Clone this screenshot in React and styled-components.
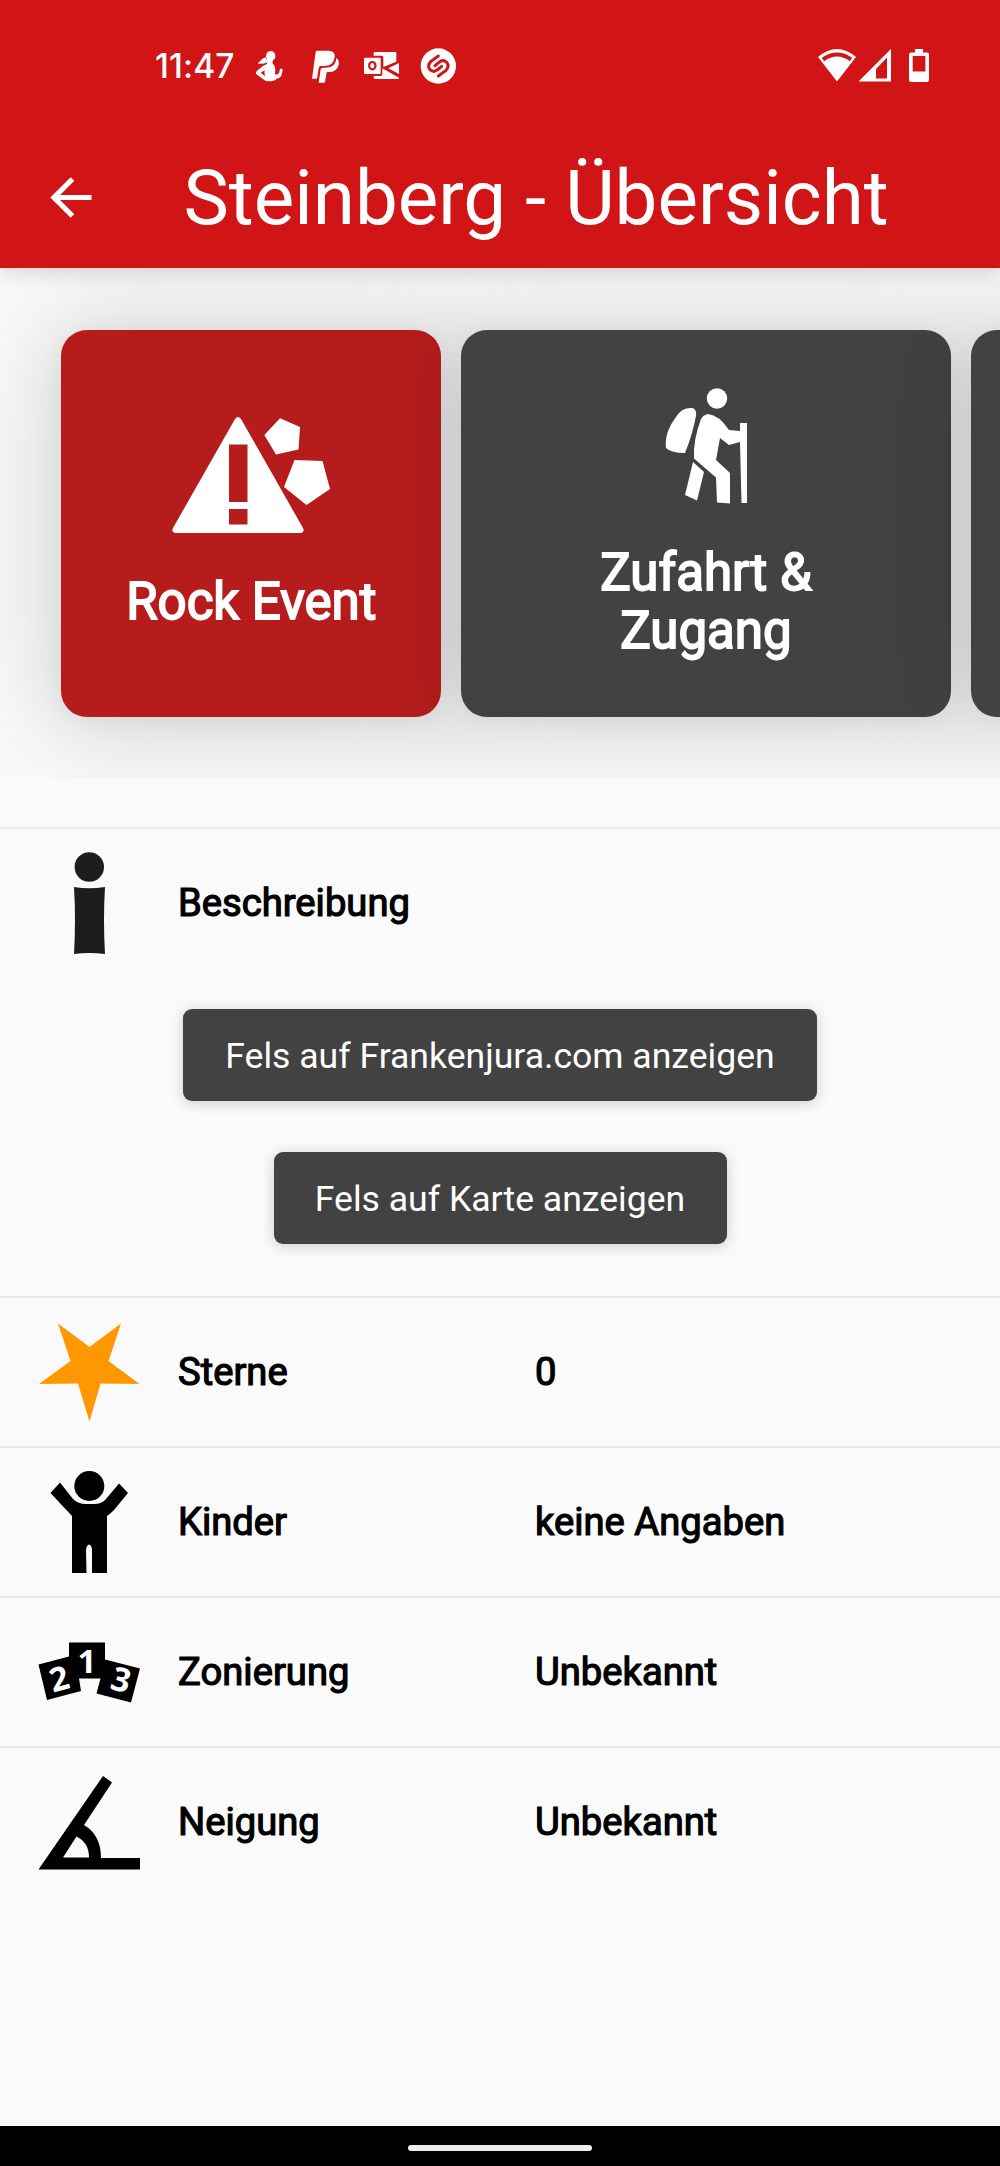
import React from 'react';
import styled, { createGlobalStyle } from 'styled-components';

const GlobalStyle = createGlobalStyle`
  body {
    margin: 0;
    background: #fafafa;
    font-family: Roboto, sans-serif;
  }
  * {
    box-sizing: border-box;
  }
  svg {
    display: block;
    flex: none;
  }
`;

const Screen = styled.div`
  width: 1000px;
  height: 2166px;
  display: flex;
  flex-direction: column;
  overflow: hidden;
  background: #fafafa;
`;

const Header = styled.header`
  position: relative;
  z-index: 1;
  height: 268px;
  flex: none;
  background: #d11415;
  color: #ffffff;
  box-shadow: 0 5px 20px rgba(0, 0, 0, 0.14);
`;

const StatusBar = styled.div`
  height: 132px;
  padding: 0 70px 0 155px;
  display: flex;
  align-items: center;
  justify-content: space-between;
`;

const StatusGroup = styled.div`
  display: flex;
  align-items: center;
`;

const Clock = styled.span`
  width: 80px;
  margin-right: 17px;
  font-family: Inter, sans-serif;
  font-size: 33.5px;
  font-weight: 550;
  letter-spacing: 0.1px;
  line-height: 40px;
  white-space: nowrap;
`;

const TitleBar = styled.div`
  height: 132px;
  display: flex;
  align-items: center;
`;

const BackButton = styled.button`
  width: 183.5px;
  height: 60px;
  padding: 0 0 0 50px;
  border: none;
  background: none;
  color: #ffffff;
`;

const Title = styled.h1`
  margin: 0;
  font-size: 76.3px;
  font-weight: 400;
  line-height: 92px;
  white-space: nowrap;
`;

const CardList = styled.div`
  height: 509.5px;
  flex: none;
  padding: 61.5px 0 0 61.3px;
  display: flex;
  gap: 20px;
  overflow: hidden;
`;

const Card = styled.div`
  width: ${(props) => props.$width}px;
  height: 387px;
  flex: none;
  padding-top: ${(props) => props.$top}px;
  display: flex;
  flex-direction: column;
  align-items: center;
  border-radius: 26px;
  background: ${(props) => props.$color};
  box-shadow: 0 4px 100px 14px rgba(0, 0, 0, 0.15), 0 3px 26px rgba(0, 0, 0, 0.05);
`;

const CardLabel = styled.div`
  margin-top: ${(props) => props.$gap}px;
  color: #ffffff;
  font-size: 51px;
  line-height: 58.5px;
  text-align: center;
  white-space: pre-line;
  -webkit-text-stroke: 1.8px #ffffff;
`;

const Details = styled.main`
  flex: 1;
  padding-top: 49.5px;
`;

const Row = styled.div`
  height: 150px;
  padding-left: 38px;
  display: grid;
  grid-template-columns: 140px 357px 1fr;
  align-items: center;
  border-top: 2px solid #ebebeb;
  color: #000000;
  font-size: 38.2px;
  -webkit-text-stroke: 1.2px #000000;
`;

const ButtonGroup = styled.div`
  height: 318.5px;
  padding-top: 31.5px;
  display: flex;
  flex-direction: column;
  align-items: center;
  gap: 51px;
`;

const ActionButton = styled.button`
  height: 92px;
  width: ${(props) => props.$width}px;
  padding: 2px 0 0;
  border: none;
  border-radius: 9px;
  background: #424242;
  color: #ffffff;
  font-family: Roboto, sans-serif;
  font-size: 35.6px;
  white-space: nowrap;
  box-shadow: 0 2px 14px rgba(0, 0, 0, 0.18);
`;

const NavigationBar = styled.footer`
  height: 40px;
  flex: none;
  display: flex;
  align-items: center;
  justify-content: center;
  background: #000000;
`;

const Pill = styled.div`
  width: 184px;
  height: 6px;
  margin-top: 4px;
  border-radius: 3px;
  background: #ececec;
`;

const NotificationIcons = () => (
  <svg width="206" height="40" viewBox="366 48 618 120" fill="#fff">
    {/* seated figure */}
    <ellipse cx="422" cy="78" rx="14" ry="15" />
    <path d="M385 98l14-13 9-3 4 15-12 4q-8-2-15 1z" />
    <path
      fillRule="evenodd"
      d="M410 88h20l-3 10q9 10 9 20l-1 14 6 2 6-5 3-12q5-4 8 2l-4 18q-4 7-14 9-8 8-24 8-9 0-13-4l-24-17q-4-6 2-11l19-15 11-5zM392 128l13 11q-3-9-1-18z"
    />
    {/* paypal */}
    <path d="M557 66q1-4 5-4h34q20 1 18 20-3 26-32 26h-10q-5 0-6 6l-5 32h-15z" />
    <path d="M619 84q10 6 7 20-5 22-30 22l-6 1-5 29q-1 2-4 2h-15l6-40q1-5 6-5h10q30 0 31-29z" />
    {/* outlook */}
    <path d="M731 70q0-4 4-4h60q4 0 4 4v25l-39 16V82q0-5-5-5h-24z" />
    <path d="M705 83h44q3 0 3 3v43q0 3-3 3h-44q-3 0-3-3V86q0-3 3-3zM807 99v33l-32-17zM757 115l51 29q-2 3-5 3h-68q-4 0-4-4v-5h21q5 0 5-5z" />
    <ellipse cx="727" cy="107" rx="9.5" ry="11" fill="none" stroke="#d11415" strokeWidth="6.5" />
    {/* shazam */}
    <circle cx="925" cy="108" r="53" />
    <path
      d="M925 78l-22 16q-13 13-3 25 11 10 23 0l12-10M925 138l22-16q13-13 3-25-11-10-23 0l-12 10"
      fill="none"
      stroke="#d11415"
      strokeWidth="9"
      strokeLinecap="round"
    />
  </svg>
);

const SystemIcons = () => (
  <svg width="112" height="34" viewBox="818 49 112 34" fill="#fff">
    <path d="M818 57q19-16 38 0l-19 24.5z" />
    <path d="M823 59.5q14-10 28 0" fill="none" stroke="#d11415" strokeWidth="4" />
    <path fillRule="evenodd" d="M858.5 81.5L891 49v32.5zM876 69v9.500h11V57.5z" />
    <path fillRule="evenodd" d="M915 49h8v3.5h4q2 0 2 2V80q0 2-2 2h-16q-2 0-2-2V54.500q0-2 2-2h4zM912.7 56v15.5h12.7V56z" />
  </svg>
);

const BackIcon = () => (
  <svg width="42" height="42" viewBox="0 0 42 42" fill="none" stroke="#fff" strokeWidth="5.2">
    <path d="M41.5 20.500H5M22.5 2L4 20.500 22.5 39" />
  </svg>
);

const RockIcon = () => (
  <svg width="158" height="116" viewBox="0 0 158 116" fill="#fff">
    <path
      fillRule="evenodd"
      d="M63 2q3-4 6 0l62 109q2 4-2 5H3q-4-1-2-5zM57 27.5V85h18.5V27.500zM57 92v15.5h18.5V92z"
    />
    <path d="M108 1.3L128 10l-1.5 22.5-22.5 5L92.3 18zM122.5 43l28 1 7.5 28-23.5 16-22.500-18z" />
  </svg>
);

const HikerIcon = () => (
  <svg width="82" height="116" viewBox="0 0 82 116" fill="#fff">
    <circle cx="52" cy="10.5" r="10.2" />
    <path d="M11 29q5-9 15-9 6 0 5 8-4 20-11 37Q6 65 1 60-1 45 11 29z" />
    <path d="M43 26q11 1 21 16l11 1v-8h7v80h-5.500l-1.500-61-11 3-9-7-4 22 14 13v30.500l-13-1-1-25-22-19Q28 52 36 31q2-4 7-5z" />
    <path d="M28 74l11 10-7 28.500L20 107z" />
  </svg>
);

const InfoIcon = () => (
  <svg width="102" height="102" viewBox="0 0 102 102" fill="#1d1d1b">
    <circle cx="51.3" cy="15" r="14.7" />
    <path d="M36 35q15 2.500 31 0-2 33 0 67-16-2-31 0 2-34 0-67z" />
  </svg>
);

const StarIcon = () => (
  <svg width="102" height="102" viewBox="0 0 102 102" fill="#ff9800">
    <path d="M20 2.500l31.500 23.500L83 2.500 70.500 40l31 23-39-.5L51.500 100.500 40 62.500 1 63l31.500-23z" />
  </svg>
);

const ChildIcon = () => (
  <svg width="102" height="102" viewBox="0 0 102 102">
    <circle cx="51.3" cy="15" r="15" />
    <path d="M22 11.500l13 16.500q5 5 13 5h8q8 0 12-5l13-15.500 9 9.500-14 17q-4 4-7 6v57.500H54V80q0-6-3-6.500-3 1-3 6.500l.5 22H34V45L12.500 22z" />
  </svg>
);

const PodiumIcon = () => (
  <svg width="102" height="102" viewBox="0 0 102 102" fontFamily="Noto Sans, sans-serif" fontSize="33" fontWeight="700" textAnchor="middle">
    <path d="M31 21.500h36v17l35 9-9 34-34.500-9 4-15H41l2 12.500-34 9L.5 43.500l30.500-8z" />
    <g fill="#ffffff" stroke="none">
      <text x="49" y="51.5">1</text>
      <text transform="translate(24 69) rotate(-15)">2</text>
      <text transform="translate(80 70) rotate(15)">3</text>
    </g>
  </svg>
);

const AngleIcon = () => (
  <svg width="102" height="102" viewBox="0 0 102 102">
    <path fillRule="evenodd" d="M65 5l9 6.500L46 54q17 10 17 33h39v11.500H.5zM38.500 65.500L25 86.500h26q0-15-12.500-21z" />
  </svg>
);

const rows = [
  { label: 'Sterne', value: '0', Icon: StarIcon },
  { label: 'Kinder', value: 'keine Angaben', Icon: ChildIcon },
  { label: 'Zonierung', value: 'Unbekannt', Icon: PodiumIcon },
  { label: 'Neigung', value: 'Unbekannt', Icon: AngleIcon },
];

const App = () => {
  return (
    <Screen>
      <GlobalStyle />
      <Header>
        <StatusBar>
          <StatusGroup>
            <Clock>11:47</Clock>
            <NotificationIcons />
          </StatusGroup>
          <SystemIcons />
        </StatusBar>
        <TitleBar>
          <BackButton aria-label="Zurück">
            <BackIcon />
          </BackButton>
          <Title>Steinberg - Übersicht</Title>
        </TitleBar>
      </Header>

      <CardList>
        <Card $width={380} $top={87} $color="#b71c1c">
          <RockIcon />
          <CardLabel $gap={40}>Rock Event</CardLabel>
        </Card>
        <Card $width={489.3} $top={58} $color="#424242">
          <HikerIcon />
          <CardLabel $gap={40}>{'Zufahrt &\nZugang'}</CardLabel>
        </Card>
        <Card $width={489.3} $top={58} $color="#424242" />
      </CardList>

      <Details>
        <Row>
          <InfoIcon />
          <span>Beschreibung</span>
        </Row>
        <ButtonGroup>
          <ActionButton $width={634}>Fels auf Frankenjura.com anzeigen</ActionButton>
          <ActionButton $width={453}>Fels auf Karte anzeigen</ActionButton>
        </ButtonGroup>
        {rows.map(({ label, value, Icon }) => (
          <Row key={label}>
            <Icon />
            <span>{label}</span>
            <span>{value}</span>
          </Row>
        ))}
      </Details>

      <NavigationBar>
        <Pill />
      </NavigationBar>
    </Screen>
  );
};

export default App;
